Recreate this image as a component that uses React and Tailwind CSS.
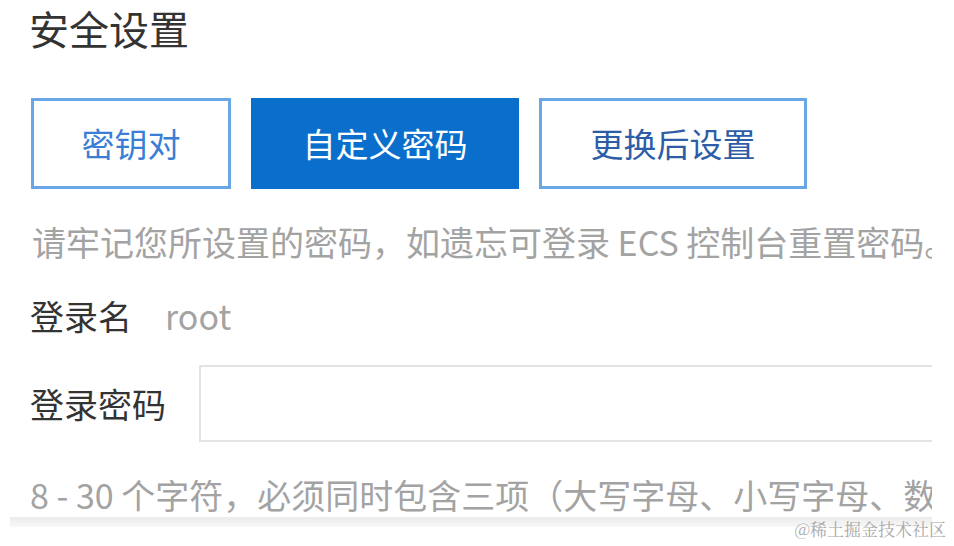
const cjk = "font-['Noto_Sans_CJK_SC','Noto_Sans',sans-serif]";

const TabButton = ({ active, tone, className, children }) => (
  <div
    className={
      "flex items-center justify-center h-[91px] text-[33px] " +
      (active
        ? "bg-[#0a6fcc] text-white "
        : "border-[3px] border-[#6aa5e6] bg-white " + tone + " ") +
      className
    }
  >
    {children}
  </div>
);

const App = () => {
  return (
    <div className={"relative w-[954px] h-[546px] bg-white overflow-hidden " + cjk}>
      <div className="w-[932px] overflow-hidden whitespace-nowrap flex flex-col">
        {/* title */}
        <div className="pl-[29px] h-[56px] leading-[56px] text-[40px] text-[#333]">
          安全设置
        </div>

        {/* login type */}
        <div className="pl-[31px] mt-[42px] flex gap-[20px]">
          <TabButton tone="text-[#3a7ed6]" className="w-[200px]">
            密钥对
          </TabButton>
          <TabButton active className="w-[268px]">
            自定义密码
          </TabButton>
          <TabButton tone="text-[#2d5da6]" className="w-[268px]">
            更换后设置
          </TabButton>
        </div>

        <div className="pl-[32px] mt-[28px] h-[50px] leading-[50px] text-[34px] text-[#a3a3a3]">
          请牢记您所设置的密码，如遗忘可登录 ECS 控制台重置密码。
        </div>

        <div className="pl-[30px] mt-[23px] h-[50px] flex items-center text-[34px]">
          <span className="text-[#333]">登录名</span>
          <span className="ml-[33px] text-[#a3a3a3]">root</span>
        </div>

        <div className="pl-[30px] mt-[25px] h-[77px] flex items-center">
          <span className="w-[169px] shrink-0 text-[34px] text-[#333]">登录密码</span>
          <div className="w-[800px] shrink-0 h-full border-2 border-[#e3e3e3] bg-white" />
        </div>

        <div className="pl-[30px] mt-[31px] h-[44px] leading-[44px] text-[34px] text-[#a3a3a3]">
          8 - 30 个字符，必须同时包含三项（大写字母、小写字母、数字和特殊符号）
        </div>

        <div className="ml-[10px] h-[10px] bg-gradient-to-b from-[#ebebeb] to-[#f8f8f8]" />
      </div>

      <div className="absolute right-[8px] bottom-[5px] text-[17px] text-[#a8a8a8] font-['Noto_Serif_CJK_SC','Noto_Sans_CJK_SC',serif]">
        @稀土掘金技术社区
      </div>
    </div>
  );
};

export default App;
